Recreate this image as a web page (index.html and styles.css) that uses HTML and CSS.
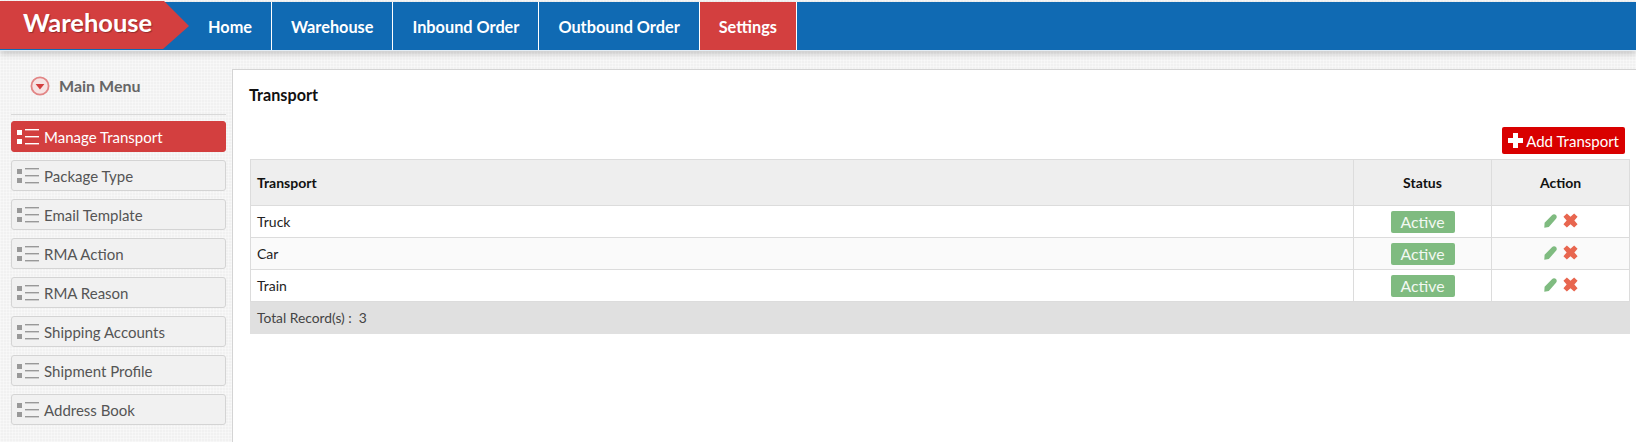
FILE: index.html
```html
<!DOCTYPE html>
<html lang="en">
<head>
<meta charset="utf-8">
<title>Warehouse - Transport</title>
<link rel="stylesheet" href="styles.css">
</head>
<body>
<svg class="defs" width="0" height="0" aria-hidden="true">
  <symbol id="list" viewBox="0 0 22 16">
    <rect x="0" y="1" width="5" height="5"/><rect x="0" y="10" width="5" height="5"/>
    <rect x="8" y="0" width="14" height="1.4"/><rect x="8" y="7" width="14" height="1.4"/><rect x="8" y="14" width="14" height="1.4"/>
  </symbol>
  <symbol id="pencil" viewBox="0 0 13 14">
    <path d="M0.3 13.7 L0.6 8.8 L8.2 1 C9.2 0 10.9 0 12 1.1 C13 2.2 13 3.8 12 4.8 L4.8 13 Z" fill="#7fbb80"/>
  </symbol>
  <symbol id="cross" viewBox="0 0 14 14">
    <path d="M3.6 0.4 L7 3.4 L10.4 0.4 L13.6 3.6 L10.6 7 L13.6 10.4 L10.4 13.6 L7 10.6 L3.6 13.6 L0.4 10.4 L3.4 7 L0.4 3.6 Z" fill="#e8664f"/>
  </symbol>
</svg>
<header class="topbar">
  <div class="logo"><span>Warehouse</span></div>
  <nav class="nav">
    <a class="nav-item nav-home">Home</a>
    <a class="nav-item">Warehouse</a>
    <a class="nav-item">Inbound Order</a>
    <a class="nav-item">Outbound Order</a>
    <a class="nav-item nav-active">Settings</a>
  </nav>
</header>
<div class="shell">
  <aside class="sidebar">
    <div class="menu-title">
      <svg class="menu-caret" viewBox="0 0 20 20" width="20" height="20"><circle cx="10" cy="10" r="8.6" fill="#f6e3e3" stroke="#e28585" stroke-width="1.8"/><path d="M5.6 8 H14.4 L10 13.6 Z" fill="#d33f3f"/></svg>
      <span>Main Menu</span>
    </div>
    <ul class="menu">
      <li class="menu-item active"><svg class="list-icon"><use href="#list"/></svg>Manage Transport</li>
      <li class="menu-item"><svg class="list-icon"><use href="#list"/></svg>Package Type</li>
      <li class="menu-item"><svg class="list-icon"><use href="#list"/></svg>Email Template</li>
      <li class="menu-item"><svg class="list-icon"><use href="#list"/></svg>RMA Action</li>
      <li class="menu-item"><svg class="list-icon"><use href="#list"/></svg>RMA Reason</li>
      <li class="menu-item"><svg class="list-icon"><use href="#list"/></svg>Shipping Accounts</li>
      <li class="menu-item"><svg class="list-icon"><use href="#list"/></svg>Shipment Profile</li>
      <li class="menu-item"><svg class="list-icon"><use href="#list"/></svg>Address Book</li>
    </ul>
  </aside>
  <main class="panel">
    <h1 class="title">Transport</h1>
    <div class="toolbar">
      <a class="add-btn"><svg class="plus" viewBox="0 0 15 15" width="15" height="15"><path d="M5 0 H10 V5 H15 V10 H10 V15 H5 V10 H0 V5 H5 Z" fill="#fff"/></svg>Add Transport</a>
    </div>
    <table class="grid">
      <thead>
        <tr><th class="col-name">Transport</th><th class="col-status">Status</th><th class="col-action">Action</th></tr>
      </thead>
      <tbody>
        <tr><td>Truck</td><td class="center"><span class="badge">Active</span></td><td class="center"><span class="actions"><svg class="ic-pencil"><use href="#pencil"/></svg><svg class="ic-cross"><use href="#cross"/></svg></span></td></tr>
        <tr class="alt"><td>Car</td><td class="center"><span class="badge">Active</span></td><td class="center"><span class="actions"><svg class="ic-pencil"><use href="#pencil"/></svg><svg class="ic-cross"><use href="#cross"/></svg></span></td></tr>
        <tr><td>Train</td><td class="center"><span class="badge">Active</span></td><td class="center"><span class="actions"><svg class="ic-pencil"><use href="#pencil"/></svg><svg class="ic-cross"><use href="#cross"/></svg></span></td></tr>
      </tbody>
      <tfoot>
        <tr><td colspan="3">Total Record(s) :&nbsp; 3</td></tr>
      </tfoot>
    </table>
  </main>
</div>
</body>
</html>
```
FILE: styles.css
```css
* { box-sizing: border-box; }
html, body { margin: 0; padding: 0; height: 100%; }
body {
  font-family: Lato, "Liberation Sans", sans-serif;
  color: #333;
  overflow: hidden;
  background-color: #f1f1f1;
  background-image:
    repeating-linear-gradient(0deg, rgba(255,255,255,.35) 0 1px, transparent 1px 3px),
    repeating-linear-gradient(90deg, rgba(255,255,255,.35) 0 1px, transparent 1px 3px);
}
.defs { position: absolute; }

.topbar {
  display: flex;
  height: 49px;
  margin-top: 2px;
  background: #106ab3;
  border-bottom: 1px solid #e3edf5;
  box-shadow: 0 3px 6px rgba(0,0,0,.18);
  position: relative;
}
.logo {
  width: 189px;
  height: 48px;
  margin-top: -1px;
  padding: 5px 0 0 23px;
  background: #d33f3f;
  clip-path: polygon(0 0, 164px 0, 189px 25px, 163px 48px, 0 48px);
  font-size: 25.5px;
  font-weight: 700;
  line-height: 32px;
  color: #fff;
  text-shadow: 1px 1px 1px rgba(0,0,0,.3);
}
.nav { display: flex; height: 48px; }
.nav-item {
  display: flex;
  align-items: center;
  padding: 0 19px;
  border-right: 1px solid #fff;
  font-size: 16.3px;
  font-weight: 700;
  color: #fff;
}
.nav-active { background: #d33f3f; border-left: 1px solid #fff; margin-left: -1px; }

.shell { display: flex; height: 391px; }
.sidebar { width: 232px; flex: none; padding: 0 6px 0 11px; }
.menu-title {
  display: flex;
  align-items: center;
  height: 64px;
  padding: 6px 0 0 19px;
  border-bottom: 1px solid #d9d9d9;
  font-size: 16px;
  font-weight: 700;
  color: #666;
}
.menu-caret { margin-right: 9px; }
.menu { list-style: none; margin: 6px 0 0; padding: 0; }
.menu-item {
  display: flex;
  align-items: center;
  height: 31px;
  margin-bottom: 8px;
  padding-left: 5px;
  background: #f1f1f1;
  border: 1px solid #d4d4d4;
  border-radius: 3px;
  font-size: 15px;
  color: #555;
}
.menu-item.active {
  background: #d33f3f;
  border-color: #d33f3f;
  color: #fff;
}
.list-icon { width: 22px; height: 16px; margin-right: 5px; fill: #999; }
.active .list-icon { fill: #fff; }

.panel {
  flex: 1;
  margin-top: 18px;
  padding: 0 6px 0 17px;
  background: #fff;
  border-top: 1px solid #d4d4d4;
  border-left: 1px solid #d4d4d4;
}
.title {
  margin: 16px 0 0 -1px;
  font-size: 16.2px;
  line-height: 18px;
  font-weight: 700;
  color: #111;
}
.toolbar { display: flex; justify-content: flex-end; margin-top: 23px; padding-right: 5px; }
.add-btn {
  display: flex;
  align-items: center;
  height: 27px;
  padding: 0 6px;
  background: #d90000;
  border-radius: 2px;
  font-size: 15px;
  color: #fff;
}
.plus { margin-right: 3px; }

.grid {
  width: 100%;
  margin-top: 5px;
  border-collapse: collapse;
  table-layout: fixed;
  font-size: 14px;
}
.grid th, .grid td { border: 1px solid #dcdcdc; padding: 0 6px; color: #222; }
.grid th { height: 46px; background: #eee; font-size: 14px; font-weight: 700; text-align: center; color: #111; }
.grid td { height: 32px; }
.grid th.col-name { text-align: left; }
.col-status { width: 138px; }
.col-action { width: 138px; }
.center { text-align: center; }
.alt td { background: #fafafa; }
.badge {
  display: inline-block;
  width: 64px;
  height: 22px;
  line-height: 22px;
  border-radius: 2px;
  background: #7fbb80;
  color: #f2f8f2;
  font-size: 15.8px;
  text-align: center;
  vertical-align: middle;
}
.actions { display: inline-flex; align-items: center; gap: 6px; vertical-align: middle; margin-top: -5px; }
.ic-pencil { width: 13px; height: 14px; }
.ic-cross { width: 15px; height: 15px; }
.grid tfoot td { background: #e0e0e0; border-color: #e0e0e0; color: #444; font-size: 13.8px; }
```
